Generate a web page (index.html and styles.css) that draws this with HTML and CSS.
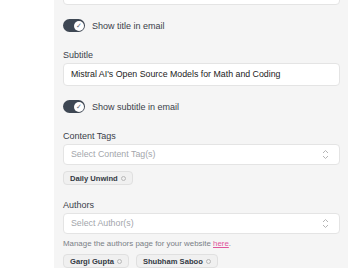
FILE: index.html
```html
<!DOCTYPE html>
<html lang="en">
<head>
  <meta charset="UTF-8">
  <title>Post settings</title>
  <meta name="viewport" content="width=device-width, initial-scale=1.0">
  <link rel="stylesheet" href="styles.css">
</head>
<body>

<div class="panel">
  <!-- title field, scrolled mostly out of view -->
  <div class="field-input top-input"></div>

  <label class="toggle-row">
    <span class="toggle"><span class="knob">&#10003;</span></span>
    <span>Show title in email</span>
  </label>

  <div class="label">Subtitle</div>
  <div class="field-input">Mistral AI's Open Source Models for Math and Coding</div>

  <label class="toggle-row">
    <span class="toggle"><span class="knob">&#10003;</span></span>
    <span>Show subtitle in email</span>
  </label>

  <div class="label">Content Tags</div>
  <div class="field-select">
    <span class="placeholder">Select Content Tag(s)</span>
    <svg class="chevrons" width="7" height="11" viewBox="0 0 7 11"><path d="M1 4 L3.5 1.5 L6 4 M1 7 L3.5 9.5 L6 7" fill="none" stroke="#b5b5b5" stroke-width="1"/></svg>
  </div>
  <div class="pills">
    <span class="pill">Daily Unwind <span class="x"></span></span>
  </div>

  <div class="label authors">Authors</div>
  <div class="field-select">
    <span class="placeholder">Select Author(s)</span>
    <svg class="chevrons" width="7" height="11" viewBox="0 0 7 11"><path d="M1 4 L3.5 1.5 L6 4 M1 7 L3.5 9.5 L6 7" fill="none" stroke="#b5b5b5" stroke-width="1"/></svg>
  </div>
  <div class="help">Manage the authors page for your website <a href="#">here</a>.</div>
  <div class="pills">
    <span class="pill">Gargi Gupta <span class="x"></span></span>
    <span class="pill">Shubham Saboo <span class="x"></span></span>
  </div>
</div>

</body>
</html>
```

FILE: styles.css
```css
* { margin: 0; padding: 0; box-sizing: border-box; }
body {
  font-family: "Liberation Sans", Arial, sans-serif;
  background-color: #ffffff;
  color: #333a44;
  overflow: hidden;
}

.panel {
  margin-left: 54px;
  min-height: 100vh;
  background-color: #f5f5f5;
  padding: 0 8px 0 9px;
  display: flex;
  flex-direction: column;
}

.field-input, .field-select {
  height: 23px;
  background-color: #fff;
  border: 1px solid #e4e4e4;
  border-radius: 4px;
  font-size: 8.8px;
  line-height: 21px;
  padding: 0 7px;
  color: #222;
}

.top-input { margin-top: -18px; }

.field-select {
  height: 21px;
  line-height: 19px;
  display: flex;
  justify-content: space-between;
  align-items: center;
}

.placeholder { color: #a3a6ab; }

.chevrons { margin-right: 3px; }

.toggle-row {
  display: flex;
  align-items: center;
  gap: 7px;
  margin-top: 14px;
  font-size: 9px;
  color: #3a4049;
  height: 13px;
}

.toggle {
  width: 22px;
  height: 13px;
  border-radius: 7px;
  background-color: #3e4753;
  display: flex;
  align-items: center;
  justify-content: flex-end;
  padding-right: 1.5px;
}

.knob {
  width: 10px;
  height: 10px;
  border-radius: 50%;
  background-color: #fff;
  color: #5c6570;
  font-size: 7px;
  line-height: 10px;
  text-align: center;
}

.label {
  font-size: 9px;
  line-height: 14px;
  color: #3a4049;
  margin-top: 16px;
  margin-bottom: 1px;
}

.label.authors { margin-top: 13px; }

.pills {
  display: flex;
  gap: 7px;
  margin-top: 6px;
}

.pill {
  display: flex;
  align-items: center;
  gap: 3px;
  height: 14px;
  padding: 0 6px;
  border: 1px solid #e0e0e0;
  border-radius: 4px;
  background-color: #f0f0f0;
  font-size: 7.6px;
  font-weight: 700;
  color: #333a44;
}

.x {
  width: 5px;
  height: 5px;
  border-radius: 50%;
  border: 1.5px solid #b8b8b8;
}

.help {
  font-size: 7.9px;
  line-height: 14px;
  color: #7a7f86;
  margin-top: 3px;
}

.help + .pills { margin-top: 3px; }

.help a {
  color: #e0559c;
  text-decoration: underline;
}
```
